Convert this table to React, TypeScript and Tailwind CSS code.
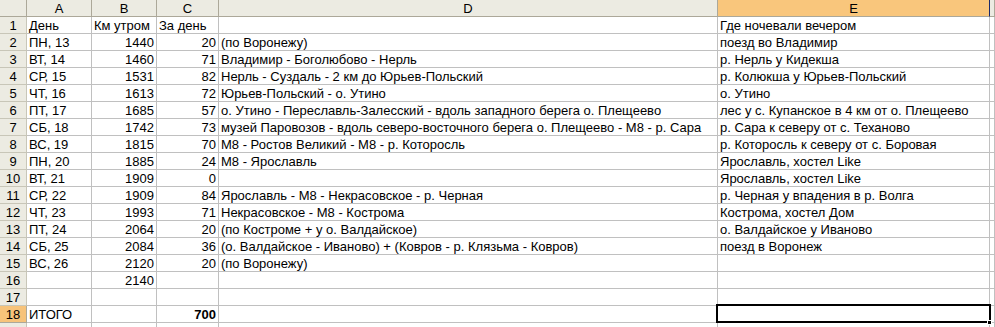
import React from "react";

type Row = [string, string, string, string, string];

const rows: Row[] = [
  ["День", "Км утром", "За день", "", "Где ночевали вечером"],
  ["ПН, 13", "1440", "20", "(по Воронежу)", "поезд во Владимир"],
  ["ВТ, 14", "1460", "71", "Владимир - Боголюбово - Нерль", "р. Нерль у Кидекша"],
  ["СР, 15", "1531", "82", "Нерль - Суздаль - 2 км до Юрьев-Польский", "р. Колюкша у Юрьев-Польский"],
  ["ЧТ, 16", "1613", "72", "Юрьев-Польский - о. Утино", "о. Утино"],
  ["ПТ, 17", "1685", "57", "о. Утино - Переславль-Залесский - вдоль западного берега о. Плещеево", "лес у с. Купанское в 4 км от о. Плещеево"],
  ["СБ, 18", "1742", "73", "музей Паровозов - вдоль северо-восточного берега о. Плещеево - М8 - р. Сара", "р. Сара к северу от с. Теханово"],
  ["ВС, 19", "1815", "70", "М8 - Ростов Великий - М8 - р. Которосль", "р. Которосль к северу от с. Боровая"],
  ["ПН, 20", "1885", "24", "М8 - Ярославль", "Ярославль, хостел Like"],
  ["ВТ, 21", "1909", "0", "", "Ярославль, хостел Like"],
  ["СР, 22", "1909", "84", "Ярославль - М8 - Некрасовское - р. Черная", "р. Черная у впадения в р. Волга"],
  ["ЧТ, 23", "1993", "71", "Некрасовское - М8 - Кострома", "Кострома, хостел Дом"],
  ["ПТ, 24", "2064", "20", "(по Костроме + у о. Валдайское)", "о. Валдайское у Иваново"],
  ["СБ, 25", "2084", "36", "(о. Валдайское - Иваново) + (Ковров - р. Клязьма - Ковров)", "поезд в Воронеж"],
  ["ВС, 26", "2120", "20", "(по Воронежу)", ""],
  ["", "2140", "", "", ""],
  ["", "", "", "", ""],
  ["ИТОГО", "", "700", "", ""],
  ["", "", "", "", ""],
];

const grid = "grid grid-cols-[27px_65px_65px_62px_499px_272px_1fr]";

function Header() {
  const hdr =
    "h-[17px] border-r border-b border-[#aca899] bg-[#ecebe2] flex items-center justify-center leading-none";
  return (
    <div className={grid}>
      <div className={hdr}></div>
      <div className={hdr}>A</div>
      <div className={hdr}>B</div>
      <div className={hdr}>C</div>
      <div className={hdr}>D</div>
      <div className="h-[17px] border-r border-b border-r-[#1c2a6b] border-b-[#aca899] bg-[#f9c67c] flex items-center justify-center leading-none">
        E
      </div>
      <div className={hdr}></div>
    </div>
  );
}

export default function App() {
  const cell =
    "h-[17px] border-r border-b border-[#c0c0c0] px-[2px] whitespace-nowrap leading-[17px] bg-white";
  return (
    <div
      className="w-[995px] h-[327px] overflow-hidden bg-white text-[13px] text-black"
      style={{ fontFamily: '"Liberation Sans", Arial, sans-serif' }}
    >
      <Header />
      {rows.map((r, i) => {
        const n = i + 1;
        const sel = n === 18;
        return (
          <div key={n} className={grid}>
            <div
              className={
                sel
                  ? "h-[17px] border-r border-b border-[#aca899] bg-[#f7c37a] flex items-center justify-center leading-none"
                  : "h-[17px] border-r border-b border-[#c8c6b8] bg-[#ecebe2] flex items-center justify-center leading-none"
              }
            >
              {n <= 18 ? n : ""}
            </div>
            <div className={cell}>{r[0]}</div>
            <div className={cell + (n === 1 ? "" : " text-right")}>{r[1]}</div>
            <div className={cell + (n === 1 ? "" : " text-right") + (sel ? " font-bold" : "")}>
              {r[2]}
            </div>
            <div className={cell + " relative z-10 overflow-visible"}>{r[3]}</div>
            <div className={cell + " relative overflow-visible" + (sel ? " z-20" : "")}>
              {r[4]}
              {sel && (
                <>
                  <div className="absolute left-[-2px] top-[-2px] right-[-2px] bottom-[-1px] border-2 border-black"></div>
                  <div className="absolute right-[-3px] bottom-[-3px] w-[5px] h-[5px] bg-black border border-white"></div>
                </>
              )}
            </div>
            <div className={cell}></div>
          </div>
        );
      })}
    </div>
  );
}
